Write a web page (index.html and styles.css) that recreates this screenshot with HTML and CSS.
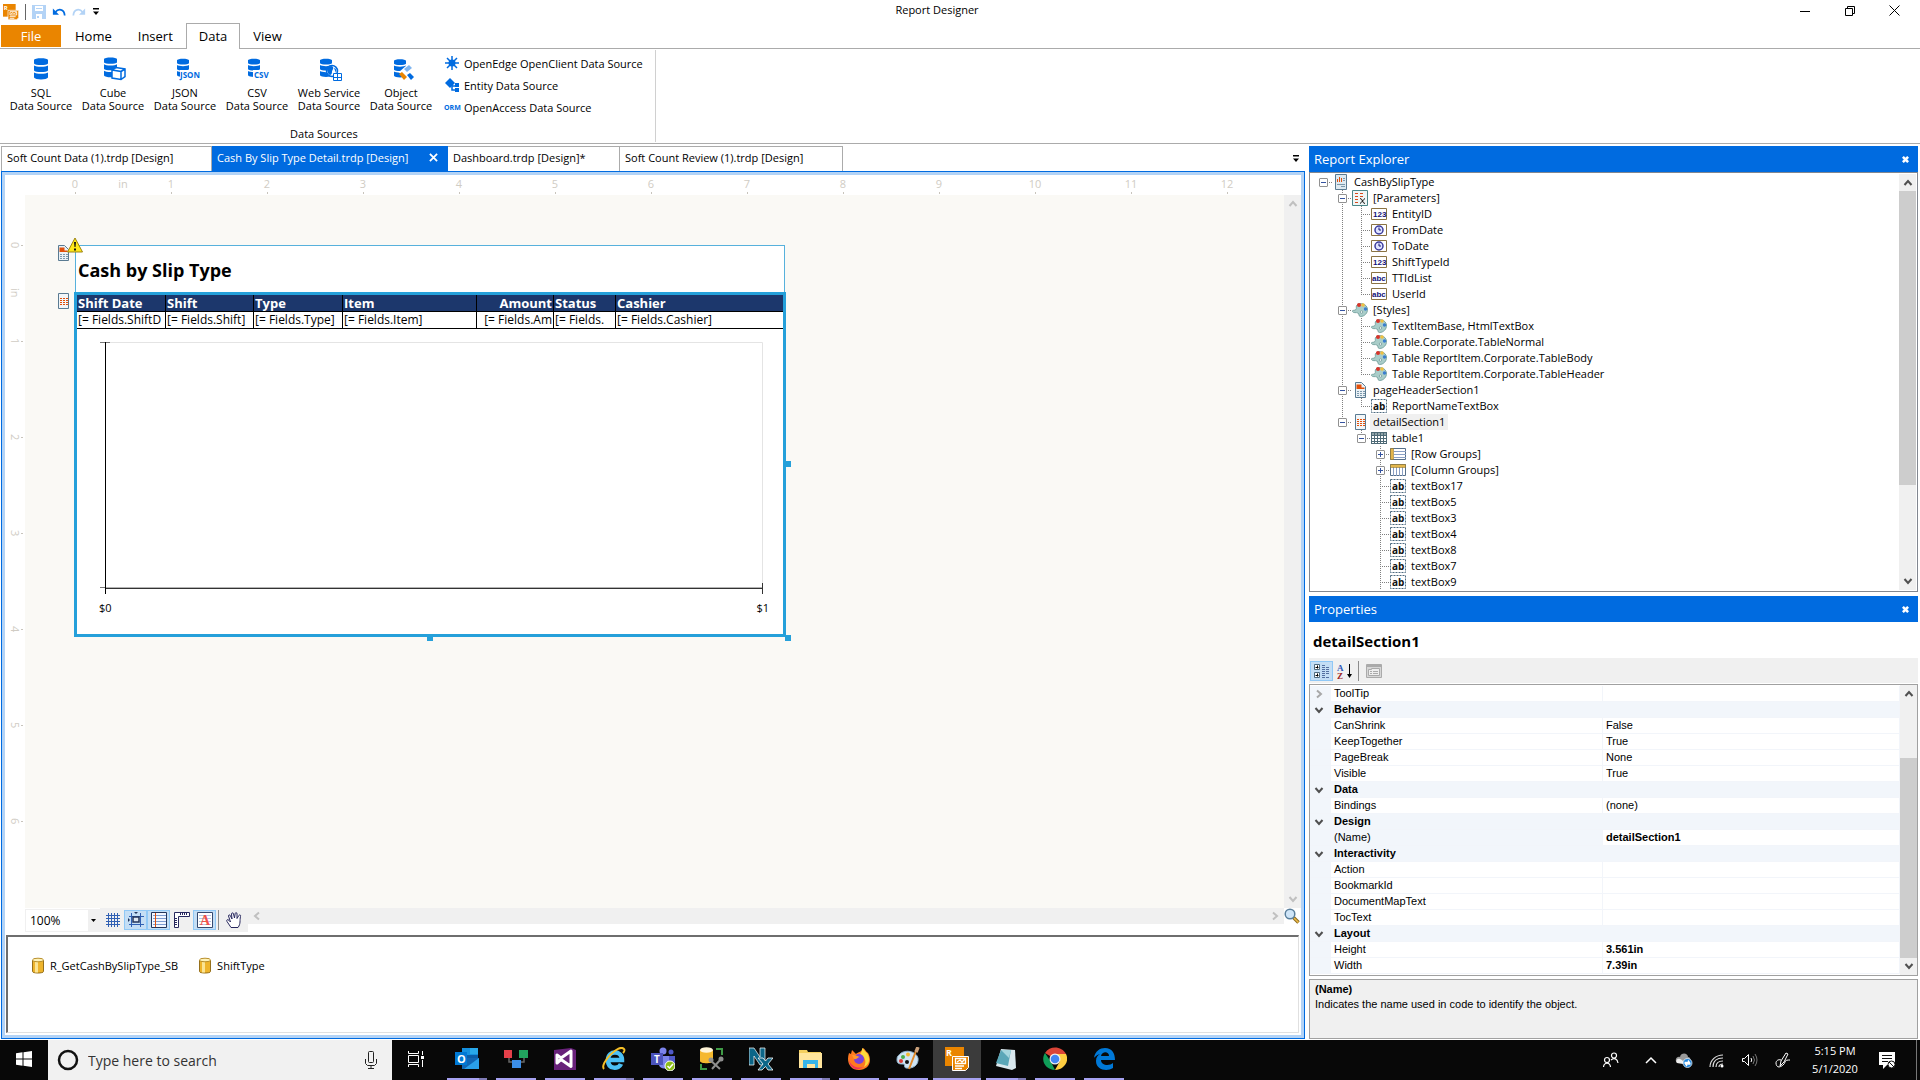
FILE: index.html
```html
<!DOCTYPE html>
<html lang="en">
<head>
    <meta charset="UTF-8">
    <meta name="viewport" content="width=device-width, initial-scale=1.0">
    <title>Report Designer</title>
    <link rel="stylesheet" href="styles.css">
</head>
<body>
    <!-- Shared icons -->
    <svg class="defs" aria-hidden="true">
        <symbol id="db" viewBox="0 0 14 22">
            <path fill="#006be0" d="M0 2c0-2.500 14-2.500 14 0v3.500c-1 2-13 2-14 0zM0 7.500c2 1.800 12 1.800 14 0v5c-1 2-13 2-14 0zM0 14.500c2 1.800 12 1.800 14 0v5c-1 2.500-13 2.500-14 0z"/>
        </symbol>
        <symbol id="app" viewBox="0 0 24 24">
            <path fill="#ea8500" d="M0 0h19v19H0z"/>
            <text x="1" y="9" font-family="Open Sans, sans-serif" font-size="9" font-weight="700" fill="#fff">R</text>
            <path fill="#ea8500" stroke="#fff" d="M7.500 9.500h16v11l-3 3h-13z"/>
            <path fill="none" stroke="#fff" stroke-width="1.300" d="M10.500 11.500h10v5h-10zM12 15l3-2 2 2 3-3M10 19h9M10 21.500h7"/>
        </symbol>
        <symbol id="header-section" viewBox="0 0 14 16">
            <path fill="#eaf1f6" stroke="#5a7b92" d="M2.500.5h6l4 4v11h-10z"/>
            <path fill="#e2500a" d="M3.500 2.500h5v3h3v1.500h-8z"/>
            <path stroke="#7b98ab" stroke-dasharray="2 1" d="M4 9.500h8M4 11.500h8M4 13.500h8"/>
        </symbol>
        <symbol id="detail-section" viewBox="0 0 14 16">
            <path fill="#f3f6f8" stroke="#5a7b92" d="M2.500.5h10v15h-10z"/>
            <path stroke="#e2500a" stroke-dasharray="2 1" d="M4 5.500h8M4 7.500h8M4 9.500h8M4 11.500h8"/>
        </symbol>
        <symbol id="report" viewBox="0 0 16 16">
            <path fill="#dfeaf1" stroke="#5a7b92" d="M2.500.5h11v15h-11z"/>
            <path stroke="#e2500a" d="M4.500 8V5M6.500 8V3M8.500 8V4"/>
            <path stroke="#7b98ab" d="M10 4.500h2M10 6.500h2M4 10.500h8M8 12.500h4"/>
        </symbol>
        <symbol id="params" viewBox="0 0 16 16">
            <path fill="#f0f6f6" stroke="#4b8688" d="M.5.5h15v15H.5z"/>
            <path stroke="#d84a1c" stroke-dasharray="3 2" d="M3 3.500h10M3 6.500h10M3 9.500h5M3 12.500h3"/>
            <path fill="none" stroke="#111" d="M8 8.500c3 0 2 5 5 5M13 8.500c-2 1-3 4-5 5"/>
        </symbol>
        <symbol id="num" viewBox="0 0 16 16">
            <path fill="#fff" stroke="#8a7343" d="M.5 2.500h15v11H.5z"/>
            <text x="2" y="11" font-family="Liberation Sans, sans-serif" font-size="8" font-weight="700" fill="#12127a">123</text>
        </symbol>
        <symbol id="str" viewBox="0 0 16 16">
            <path fill="#fff" stroke="#8a7343" d="M.5 2.500h15v11H.5z"/>
            <text x="1" y="11" font-family="Liberation Sans, sans-serif" font-size="8" font-weight="700" fill="#12127a">abc</text>
        </symbol>
        <symbol id="date" viewBox="0 0 16 16">
            <path fill="#fff" stroke="#8a7343" d="M.5 2.500h15v11H.5z"/>
            <circle cx="8" cy="8" r="4" fill="#dfe4ff" stroke="#3b3b9c" stroke-width="1.500"/>
            <path fill="none" stroke="#12127a" d="M8 5.500V8h2"/>
        </symbol>
        <symbol id="palette" viewBox="0 0 16 16">
            <path fill="#a9cdc9" stroke="#7ba6a3" d="M5 3c3-3 10-1 10.500 4 .3 4-3 7.500-7 7.500-2 0-1-2.500-2.500-3.500S1 11.500.5 9.500 3 9 4 7.500 3.500 4.500 5 3z"/>
            <circle cx="7" cy="3" r="2" fill="#d8342a"/>
            <circle cx="11" cy="3" r="1.800" fill="#f0c040"/>
            <circle cx="13.500" cy="7" r="1.700" fill="#3b7ed0"/>
            <circle cx="9.500" cy="10" r="1.200" fill="#fff" stroke="#64918f" stroke-width=".7"/>
        </symbol>
        <symbol id="textbox" viewBox="0 0 16 16">
            <path fill="#fff" stroke="#4d6a80" stroke-dasharray="2 1" d="M.5 1.500h15v13H.5z"/>
            <text x="2" y="12" font-family="Open Sans, sans-serif" font-size="10" font-weight="700" fill="#111">ab</text>
        </symbol>
        <symbol id="table" viewBox="0 0 16 16">
            <path fill="#fff" d="M0 2h16v12H0z"/>
            <path fill="#8fa3a8" d="M0 2h16v3H0z"/>
            <path stroke="#4e6a76" d="M.5 2v12M3.500 2v12M6.500 2v12M9.500 2v12M12.500 2v12M15.500 2v12M0 2.500h16M0 5.500h16M0 8.500h16M0 11.500h16M0 13.500h16"/>
        </symbol>
        <symbol id="row-groups" viewBox="0 0 16 16">
            <path fill="#fff" stroke="#56708a" d="M.5 2.500h15v11H.5z"/>
            <path stroke="#8aa0c4" d="M4 5.500h12M4 8.500h12M4 11.500h12"/>
            <path fill="#e3b64c" stroke="#8a6a20" stroke-width=".5" d="M.5 2.500h3v11h-3z"/>
        </symbol>
        <symbol id="col-groups" viewBox="0 0 16 16">
            <path fill="#fff" stroke="#56708a" d="M.5 2.500h15v11H.5z"/>
            <path stroke="#8aa0c4" d="M3.500 5v9M6.500 5v9M9.500 5v9M12.500 5v9"/>
            <path fill="#e3b64c" stroke="#8a6a20" stroke-width=".5" d="M.5 2.500h15v3H.5z"/>
        </symbol>
        <symbol id="cylinder" viewBox="0 0 14 18">
            <path fill="#eeb42c" stroke="#96701c" d="M1.500 3v11.500c0 2 11 2 11 0V3"/>
            <path fill="#fbe494" d="M4 4h3v11.500H4z"/>
            <ellipse cx="7" cy="3" rx="5.500" ry="1.800" fill="#fff3b8" stroke="#b98f2c"/>
        </symbol>
        <symbol id="cross" viewBox="0 0 10 10">
            <path fill="none" stroke="currentColor" stroke-width="2" d="M1 1l8 8M9 1L1 9"/>
        </symbol>
        <symbol id="cross-bold" viewBox="0 0 8 8">
            <path fill="none" stroke="currentColor" stroke-width="3" d="M1 1l6 6M7 1L1 7"/>
        </symbol>
        <symbol id="up" viewBox="0 0 10 10">
            <path fill="none" stroke="currentColor" stroke-width="2" d="M1.500 7L5 3l3.500 4"/>
        </symbol>
        <symbol id="down" viewBox="0 0 10 10">
            <path fill="none" stroke="currentColor" stroke-width="2" d="M1.500 3L5 7l3.500-4"/>
        </symbol>
        <symbol id="left" viewBox="0 0 10 10">
            <path fill="none" stroke="currentColor" stroke-width="2" d="M7 1.500L3 5l4 3.500"/>
        </symbol>
        <symbol id="right" viewBox="0 0 10 10">
            <path fill="none" stroke="currentColor" stroke-width="2" d="M3 1.500L7 5 3 8.500"/>
        </symbol>
        <symbol id="menu-arrow" viewBox="0 0 8 8">
            <path d="M1 0h6v1.500H1zM1 3.500h6L4 7z"/>
        </symbol>
    </svg>

    <header class="titlebar">
        <div class="quick-access">
            <svg class="app-icon" viewBox="0 0 24 24"><use href="#app"/></svg>
            <span class="divider"></span>
            <button aria-label="Save"><svg width="14" height="14" viewBox="0 0 14 14"><path fill="#b3d3f6" d="M0 0h14v14H0z"/><path fill="#fff" d="M3 1h8v5H3zM4 9h6v5H4z"/><path fill="#b3d3f6" d="M5 11h2v2H5zM4 3h6v1H4z"/></svg></button>
            <button aria-label="Undo"><svg width="14" height="12" viewBox="0 0 16 12"><path fill="#006be0" d="M1 2v7h7z"/><path fill="none" stroke="#006be0" stroke-width="2" d="M4 6c3-4 10-4 10.500 4"/></svg></button>
            <button aria-label="Redo"><svg width="14" height="12" viewBox="0 0 16 12"><path fill="#b3d3f6" d="M15 2v7H8z"/><path fill="none" stroke="#b3d3f6" stroke-width="2" d="M12 6C9 2 2 2 1.500 10"/></svg></button>
            <button aria-label="Customize toolbar"><svg width="8" height="8"><use href="#menu-arrow"/></svg></button>
        </div>
        <h1 class="window-title">Report Designer</h1>
        <div class="window-controls">
            <button aria-label="Minimize"><svg width="10" height="10"><path stroke="#000" d="M0 5.500h10"/></svg></button>
            <button aria-label="Restore"><svg width="10" height="10"><path fill="none" stroke="#000" d="M.5 2.500h7v7h-7zM2.500 2V.5h7v7H8"/></svg></button>
            <button aria-label="Close"><svg width="11" height="11"><path stroke="#000" d="M.5.5l10 10M10.500.5l-10 10"/></svg></button>
        </div>
    </header>

    <nav class="ribbon-tabs">
        <button class="tab file">File</button>
        <button class="tab">Home</button>
        <button class="tab">Insert</button>
        <button class="tab current">Data</button>
        <button class="tab">View</button>
    </nav>

    <section class="ribbon">
        <div class="ribbon-group">
            <div class="ribbon-items">
                <button class="big-button">
                    <svg class="big-icon" viewBox="0 0 28 24"><use href="#db" x="7" y="1" width="14" height="22"/></svg>
                    SQL<br>Data Source
                </button>
                <button class="big-button">
                    <svg class="big-icon" viewBox="0 0 28 24"><use href="#db" x="5" y="0" width="13" height="21"/><path fill="#fff" stroke="#006be0" stroke-width="1.500" d="M13 13l4-2.500 9 1.500v7.500l-4 3-9-1.500zM13 13l9 1.500v8M22 14.500l4-2.500"/></svg>
                    Cube<br>Data Source
                </button>
                <button class="big-button">
                    <svg class="big-icon" viewBox="0 0 28 24"><use href="#db" x="6" y="1" width="12" height="20"/><path fill="#fff" d="M9 13h20v9H9z"/><text class="icon-text" x="9" y="21">JSON</text></svg>
                    JSON<br>Data Source
                </button>
                <button class="big-button">
                    <svg class="big-icon" viewBox="0 0 28 24"><use href="#db" x="5" y="1" width="12" height="20"/><path fill="#fff" d="M10 13h18v9H10z"/><text class="icon-text" x="11" y="21">CSV</text></svg>
                    CSV<br>Data Source
                </button>
                <button class="big-button">
                    <svg class="big-icon" viewBox="0 0 28 24"><use href="#db" x="5" y="1" width="12" height="20"/><circle cx="17" cy="14" r="5.500" fill="#fff" stroke="#006be0" stroke-width="1.500"/><path fill="#006be0" d="M12 12c1-3 5-4 6-2s-1 3-1 5-1 3-2 3-3-3-3-6zM19 11c2 0 3 3 2 5z"/><path fill="#fff" stroke="#006be0" d="M18.500 16.500h8v7h-8zM22.500 16v8M18 20.500h9"/></svg>
                    Web Service<br>Data Source
                </button>
                <button class="big-button">
                    <svg class="big-icon" viewBox="0 0 28 24"><use href="#db" x="7" y="1" width="12" height="21"/><path fill="#fff" d="M12 15l8-7 6 14-6 2z"/><path fill="#7fb5f0" d="M17 12l5-4 3 3-5 4z"/><path fill="#ea8500" d="M12 17l3-2 5 5-3 3z"/><path fill="#006be0" d="M20 18l3-2 4 4-3 3z"/></svg>
                    Object<br>Data Source
                </button>
                <div class="small-buttons">
                    <button class="small-button">
                        <svg class="small-icon" viewBox="0 0 16 16"><path stroke="#006be0" stroke-width="1.500" d="M8 1v14M1 8h14M3 3l10 10M13 3L3 13"/><circle cx="8" cy="8" r="3.500" fill="#006be0"/></svg>
                        OpenEdge OpenClient Data Source
                    </button>
                    <button class="small-button">
                        <svg class="small-icon" viewBox="0 0 16 16"><path fill="#006be0" d="M6 1l5 5-5 5-5-5z"/><path fill="none" stroke="#006be0" stroke-width="1.500" d="M8 7v6h4M8 9h4"/><path fill="#006be0" d="M11 6h4v4h-4zM11 11h4v4h-4z"/></svg>
                        Entity Data Source
                    </button>
                    <button class="small-button">
                        <svg class="small-icon" viewBox="0 0 16 16"><text class="orm-text" x="0" y="11">ORM</text></svg>
                        OpenAccess Data Source
                    </button>
                </div>
            </div>
            <div class="group-name">Data Sources</div>
        </div>
    </section>

    <div class="workspace">
        <main class="documents">
            <div class="doc-tabs">
                <button class="doc-tab first">Soft Count Data (1).trdp [Design]</button>
                <button class="doc-tab active">Cash By Slip Type Detail.trdp [Design]<svg width="9" height="9"><use href="#cross"/></svg></button>
                <button class="doc-tab third">Dashboard.trdp [Design]*</button>
                <button class="doc-tab fourth">Soft Count Review (1).trdp [Design]</button>
                <button class="doc-menu" aria-label="Open documents"><svg width="8" height="8"><use href="#menu-arrow"/></svg></button>
            </div>

            <div class="designer">
                <div class="ruler-top">
                    <span class="mark">0</span><span class="unit">in</span><span class="mark">1</span><span class="mark">2</span><span class="mark">3</span><span class="mark">4</span><span class="mark">5</span><span class="mark">6</span><span class="mark">7</span><span class="mark">8</span><span class="mark">9</span><span class="mark">10</span><span class="mark">11</span><span class="mark">12</span>
                </div>
                <div class="design-row">
                    <div class="ruler-left">
                        <span class="mark">0</span><span class="unit">in</span><span class="mark">1</span><span class="mark">2</span><span class="mark">3</span><span class="mark">4</span><span class="mark">5</span><span class="mark">6</span>
                    </div>
                    <div class="canvas">
                        <div class="section-icons">
                            <svg width="14" height="16"><use href="#header-section"/></svg>
                            <svg width="14" height="16"><use href="#detail-section"/></svg>
                        </div>
                        <article class="report">
                            <svg class="warning" viewBox="0 0 16 16"><path fill="#ffe81a" stroke="#9c8412" stroke-linejoin="round" d="M8 1l7.500 14H.5z"/><path fill="#111" d="M7 5h2l-.5 5h-1zM7 11.500h2v2H7z"/></svg>
                            <div class="page-header">
                                <h2>Cash by Slip Type</h2>
                            </div>
                            <div class="detail">
                                <table class="report-table">
                                    <colgroup><col class="c-date"><col class="c-shift"><col class="c-date"><col class="c-item"><col class="c-amount"><col class="c-status"><col></colgroup>
                                    <thead>
                                        <tr><th>Shift Date</th><th>Shift</th><th>Type</th><th>Item</th><th class="num">Amount</th><th>Status</th><th>Cashier</th></tr>
                                    </thead>
                                    <tbody>
                                        <tr><td>[= Fields.ShiftD</td><td>[= Fields.Shift]</td><td>[= Fields.Type]</td><td>[= Fields.Item]</td><td class="num">[= Fields.Am</td><td>[= Fields.</td><td>[= Fields.Cashier]</td></tr>
                                    </tbody>
                                </table>
                                <div class="chart">
                                    <svg viewBox="0 0 667 254" width="667" height="254">
                                        <path fill="none" stroke="#e4e4e4" d="M5 2.500h657.500V245"/>
                                        <path stroke="#777" d="M0 2.500h10M0 247.500h10"/>
                                        <path stroke="#b4b4b4" d="M5 247.500h658"/>
                                        <path stroke="#333" d="M5 248.500h658M662.500 243v11"/>
                                        <path stroke="#000" d="M5.500 2v252"/>
                                    </svg>
                                    <div class="chart-labels"><span>$0</span><span>$1</span></div>
                                </div>
                                <i class="handle right"></i>
                                <i class="handle bottom"></i>
                                <i class="handle corner"></i>
                            </div>
                        </article>
                    </div>
                    <div class="scroll-v faded">
                        <svg width="10" height="10"><use href="#up"/></svg>
                        <svg width="10" height="10"><use href="#down"/></svg>
                    </div>
                </div>

                <div class="design-tools">
                    <select class="zoom" aria-label="Zoom"><option>100%</option></select>
                    <div class="tool-buttons">
                        <button aria-label="Show grid"><svg width="16" height="16"><path stroke="#2f5fb3" d="M3.500 1v14M6.500 1v14M9.500 1v14M12.500 1v14M1 3.500h14M1 6.500h14M1 9.500h14M1 12.500h14"/></svg></button>
                        <button class="on" aria-label="Snap to grid"><svg width="16" height="16"><path stroke="#2f5fb3" d="M3.500 1v14M12.500 1v14M1 4.500h15M1 12.500h15"/><path fill="#dfe7f0" stroke="#23345a" stroke-width="1.500" d="M5 5h6v5H5z"/><path fill="#23345a" d="M6 0h4L8 2zM0 6v4l2-2z"/></svg></button>
                        <button class="on" aria-label="Snap lines"><svg width="16" height="16"><path fill="#f2f6ff" stroke="#23345a" d="M.5.5h15v15H.5z"/><path stroke="#7d9bd0" d="M2 3.500h13M2 6.500h13M2 9.500h13M2 12.500h13"/><path stroke="#e2500a" d="M4.500 1v14"/></svg></button>
                        <button aria-label="Show rulers"><svg width="16" height="16"><path fill="#fff" stroke="#28285e" d="M.5.5h15v4h-11v11h-4z"/><path stroke="#28285e" d="M6.500 1v2M8.500 1v2M10.500 1v2M12.500 1v2M1 6.500h2M1 8.500h2M1 10.500h2M1 12.500h2"/></svg></button>
                        <button class="on" aria-label="Show dimensions"><svg width="16" height="16"><path fill="#fff" stroke="#35496f" d="M.5.5h15v15H.5z"/><path stroke="#b4c4e4" d="M2 3.500h12M2 6.500h12M2 9.500h12M2 12.500h12"/><text x="3" y="13" font-family="Liberation Serif, serif" font-size="14" font-weight="700" fill="#f0524a">A</text></svg></button>
                        <span class="divider"></span>
                        <button aria-label="Pan"><svg width="16" height="16" viewBox="0 0 16 16"><path fill="#fff" stroke="#28285e" d="M5 15.500L1 9.500c-1-2 1-2.500 2-1L4.500 10 2.500 4c0-1.500 1.500-1.500 2 0L6 7 5.500 2c0-1.500 2-1.500 2 0L8.500 6l.7-4.500c.3-1.500 2-1 1.800.5L11 6.500l1.800-3c1-1.200 2.200-.5 1.700 1-1 4 .5 7-2.500 11z"/></svg></button>
                    </div>
                    <div class="scroll-h faded">
                        <svg width="10" height="10"><use href="#left"/></svg>
                        <svg width="10" height="10"><use href="#right"/></svg>
                    </div>
                    <button class="magnifier" aria-label="Zoom to fit"><svg width="16" height="16" viewBox="0 0 16 16"><path stroke="#8a6a20" stroke-width="3.500" d="M9.500 9.500l5 5"/><path stroke="#f0bc4a" stroke-width="1.500" d="M10 10l4.500 4.500"/><circle cx="6" cy="6" r="4.800" fill="#cfe5f8" stroke="#5a7f9c" stroke-width="1.500"/></svg></button>
                </div>

                <div class="component-tray">
                    <div class="component"><svg width="14" height="18"><use href="#cylinder"/></svg>R_GetCashBySlipType_SB</div>
                    <div class="component"><svg width="14" height="18"><use href="#cylinder"/></svg>ShiftType</div>
                </div>
            </div>
        </main>

        <aside class="side">
            <section class="panel explorer">
                <header class="panel-title"><h2>Report Explorer</h2><button aria-label="Close Report Explorer"><svg width="7" height="7"><use href="#cross-bold"/></svg></button></header>
                <div class="tree-box">
                    <ul class="tree">
                        <li><div class="node"><i class="toggle open"></i><svg><use href="#report"/></svg><span>CashBySlipType</span></div>
                            <ul>
                                <li><div class="node"><i class="toggle open"></i><svg><use href="#params"/></svg><span>[Parameters]</span></div>
                                    <ul>
                                        <li><div class="node"><i class="toggle"></i><svg><use href="#num"/></svg><span>EntityID</span></div></li>
                                        <li><div class="node"><i class="toggle"></i><svg><use href="#date"/></svg><span>FromDate</span></div></li>
                                        <li><div class="node"><i class="toggle"></i><svg><use href="#date"/></svg><span>ToDate</span></div></li>
                                        <li><div class="node"><i class="toggle"></i><svg><use href="#num"/></svg><span>ShiftTypeId</span></div></li>
                                        <li><div class="node"><i class="toggle"></i><svg><use href="#str"/></svg><span>TTIdList</span></div></li>
                                        <li><div class="node"><i class="toggle"></i><svg><use href="#str"/></svg><span>UserId</span></div></li>
                                    </ul>
                                </li>
                                <li><div class="node"><i class="toggle open"></i><svg><use href="#palette"/></svg><span>[Styles]</span></div>
                                    <ul>
                                        <li><div class="node"><i class="toggle"></i><svg><use href="#palette"/></svg><span>TextItemBase, HtmlTextBox</span></div></li>
                                        <li><div class="node"><i class="toggle"></i><svg><use href="#palette"/></svg><span>Table.Corporate.TableNormal</span></div></li>
                                        <li><div class="node"><i class="toggle"></i><svg><use href="#palette"/></svg><span>Table ReportItem.Corporate.TableBody</span></div></li>
                                        <li><div class="node"><i class="toggle"></i><svg><use href="#palette"/></svg><span>Table ReportItem.Corporate.TableHeader</span></div></li>
                                    </ul>
                                </li>
                                <li><div class="node"><i class="toggle open"></i><svg><use href="#header-section"/></svg><span>pageHeaderSection1</span></div>
                                    <ul>
                                        <li><div class="node"><i class="toggle"></i><svg><use href="#textbox"/></svg><span>ReportNameTextBox</span></div></li>
                                    </ul>
                                </li>
                                <li><div class="node selected"><i class="toggle open"></i><svg><use href="#detail-section"/></svg><span>detailSection1</span></div>
                                    <ul>
                                        <li><div class="node"><i class="toggle open"></i><svg><use href="#table"/></svg><span>table1</span></div>
                                            <ul class="continued">
                                                <li><div class="node"><i class="toggle closed"></i><svg><use href="#row-groups"/></svg><span>[Row Groups]</span></div></li>
                                                <li><div class="node"><i class="toggle closed"></i><svg><use href="#col-groups"/></svg><span>[Column Groups]</span></div></li>
                                                <li><div class="node"><i class="toggle"></i><svg><use href="#textbox"/></svg><span>textBox17</span></div></li>
                                                <li><div class="node"><i class="toggle"></i><svg><use href="#textbox"/></svg><span>textBox5</span></div></li>
                                                <li><div class="node"><i class="toggle"></i><svg><use href="#textbox"/></svg><span>textBox3</span></div></li>
                                                <li><div class="node"><i class="toggle"></i><svg><use href="#textbox"/></svg><span>textBox4</span></div></li>
                                                <li><div class="node"><i class="toggle"></i><svg><use href="#textbox"/></svg><span>textBox8</span></div></li>
                                                <li><div class="node"><i class="toggle"></i><svg><use href="#textbox"/></svg><span>textBox7</span></div></li>
                                                <li><div class="node"><i class="toggle"></i><svg><use href="#textbox"/></svg><span>textBox9</span></div></li>
                                            </ul>
                                        </li>
                                    </ul>
                                </li>
                            </ul>
                        </li>
                    </ul>
                    <div class="scroll-v">
                        <svg width="10" height="10"><use href="#up"/></svg>
                        <div class="track"><div class="thumb tree-thumb"></div></div>
                        <svg width="10" height="10"><use href="#down"/></svg>
                    </div>
                </div>
            </section>

            <section class="panel properties">
                <header class="panel-title"><h2>Properties</h2><button aria-label="Close Properties"><svg width="7" height="7"><use href="#cross-bold"/></svg></button></header>
                <h3 class="object-name">detailSection1</h3>
                <div class="prop-tools">
                    <button class="on" aria-label="Categorized"><svg width="16" height="16"><path fill="#fff" stroke="#4d6a80" d="M.5 1.500h5v5h-5zM.5 9.500h5v5h-5z"/><path stroke="#000" d="M1.500 4.500h3M3.500 2.500v3M1.500 12.500h3M3.500 10.500v3"/><path stroke="#5570a0" d="M8 2.500h3M8 4.500h8M8 6.500h8M8 8.500h8M8 10.500h8M8 12.500h3M8 14.500h8" stroke-dasharray="3 1"/></svg></button>
                    <button aria-label="Alphabetical"><svg width="16" height="16"><text x="0" y="8" font-family="Liberation Serif, serif" font-size="9" font-weight="700" fill="#2a56b8">A</text><text x="0" y="16" font-family="Liberation Serif, serif" font-size="9" font-weight="700" fill="#9c2424">Z</text><path stroke="#000" d="M12.500 1v13"/><path d="M10 11h5l-2.500 4z"/></svg></button>
                    <span class="divider"></span>
                    <button aria-label="Property pages" disabled><svg width="16" height="16"><path fill="#d6d6d6" stroke="#aaa" d="M.5 1.500h15v13H.5z"/><path fill="#aaa" d="M1 2h14v2H1z"/><path fill="#eee" stroke="#aaa" d="M2.500 6.500h3v-1h8v7h-11zM4 8.500h2M7 8.500h5M4 10.500h2M7 10.500h5"/></svg></button>
                </div>
                <div class="grid-box">
                    <table class="prop-grid">
                        <colgroup><col class="g-toggle"><col class="g-name"><col></colgroup>
                        <tbody>
                            <tr><td class="dim"><svg width="10" height="10"><use href="#right"/></svg></td><td>ToolTip</td><td></td></tr>
                            <tr class="category"><td><svg width="10" height="10"><use href="#down"/></svg></td><th colspan="2">Behavior</th></tr>
                            <tr><td></td><td>CanShrink</td><td>False</td></tr>
                            <tr><td></td><td>KeepTogether</td><td>True</td></tr>
                            <tr><td></td><td>PageBreak</td><td>None</td></tr>
                            <tr><td></td><td>Visible</td><td>True</td></tr>
                            <tr class="category"><td><svg width="10" height="10"><use href="#down"/></svg></td><th colspan="2">Data</th></tr>
                            <tr><td></td><td>Bindings</td><td>(none)</td></tr>
                            <tr class="category"><td><svg width="10" height="10"><use href="#down"/></svg></td><th colspan="2">Design</th></tr>
                            <tr class="picked"><td></td><td>(Name)</td><td class="changed">detailSection1</td></tr>
                            <tr class="category"><td><svg width="10" height="10"><use href="#down"/></svg></td><th colspan="2">Interactivity</th></tr>
                            <tr><td></td><td>Action</td><td></td></tr>
                            <tr><td></td><td>BookmarkId</td><td></td></tr>
                            <tr><td></td><td>DocumentMapText</td><td></td></tr>
                            <tr><td></td><td>TocText</td><td></td></tr>
                            <tr class="category"><td><svg width="10" height="10"><use href="#down"/></svg></td><th colspan="2">Layout</th></tr>
                            <tr><td></td><td>Height</td><td class="changed">3.561in</td></tr>
                            <tr><td></td><td>Width</td><td class="changed">7.39in</td></tr>
                        </tbody>
                    </table>
                    <div class="scroll-v">
                        <svg width="10" height="10"><use href="#up"/></svg>
                        <div class="track at-end"><div class="thumb grid-thumb"></div></div>
                        <svg width="10" height="10"><use href="#down"/></svg>
                    </div>
                </div>
                <div class="prop-help">
                    <strong>(Name)</strong>
                    <p>Indicates the name used in code to identify the object.</p>
                </div>
            </section>
        </aside>
    </div>

    <footer class="taskbar">
        <button class="start" aria-label="Start"><svg width="16" height="16"><path fill="#fff" d="M0 2.300l6.500-1v6.200H0zM7.500 1.200L16 0v7.500H7.500zM0 8.500h6.500v6.200l-6.500-1zM7.500 8.500H16V16l-8.500-1.200z"/></svg></button>
        <div class="search">
            <svg width="22" height="22"><circle cx="11" cy="11" r="9" fill="none" stroke="#111" stroke-width="2.500"/></svg>
            <input type="text" placeholder="Type here to search" aria-label="Search">
            <svg width="12" height="18"><rect x="3.500" y=".5" width="5" height="11" rx="1" fill="none" stroke="#222"/><path fill="none" stroke="#222" d="M.5 8v4.500l2 2h7l2-2V8M6 15v2.500M3 17.500h6"/></svg>
        </div>
        <button class="task-view" aria-label="Task view"><svg width="16" height="16"><path fill="none" stroke="#fff" d="M.5 0v2.500h10V0M.5 4.500h10v7H.5zM.5 16v-2.500h10V16M14.500 0v4M14.500 9v7"/><path fill="#fff" d="M13 5h3v3h-3z"/></svg></button>

        <div class="apps">
            <button class="app many" aria-label="Outlook"><svg viewBox="0 0 24 24"><path fill="#1490df" d="M7 1h16v9H7z"/><path fill="#28a8ea" d="M15 1h8v6h-8z"/><path fill="#0a5ca8" d="M7 8h16v5H7z"/><path fill="#1066b5" d="M7 11h17v11H7z"/><path fill="#2aa0ea" d="M24 11v11H9z"/><path fill="#0078d4" d="M0 5h12v13H0z"/><text x="2" y="16" font-family="Open Sans, sans-serif" font-size="11" font-weight="700" fill="#fff">O</text></svg></button>
            <button class="app" aria-label="Workflow"><svg viewBox="0 0 24 24"><path fill="none" stroke="#666" stroke-width="1.500" d="M5 11v4h15v-4"/><path fill="#e5404a" d="M0 3h8v8H0z"/><path fill="#22a45e" d="M15 3h9v8h-9z"/><path fill="#3b8ee8" d="M8 13h9v8H8z"/></svg></button>
            <button class="app" aria-label="Visual Studio"><svg viewBox="0 0 24 24"><path fill="#68217a" d="M1 3l17-2 5 2v20H1z"/><path fill="none" stroke="#fff" stroke-width="3" stroke-linejoin="round" d="M4 8v8l4-3.500 10 7V4L8 11z"/></svg></button>
            <button class="app many" aria-label="Internet Explorer"><svg viewBox="0 0 24 24"><path fill="none" stroke="#4cc0f4" stroke-width="4.500" d="M5 13h15c0-10-14-10-14 0s11 9 13 4"/><path fill="none" stroke="#f5bf27" stroke-width="2" d="M2 22C-3 17 17-4 22 2c1 1 0 3-1 4"/></svg></button>
            <button class="app" aria-label="Teams"><svg viewBox="0 0 24 24"><circle cx="12" cy="4" r="3.500" fill="#7b83eb"/><circle cx="20" cy="5" r="2.500" fill="#5059c9"/><path fill="#7b83eb" d="M8 9h10v10c-3 4-9 3-10-1z"/><path fill="#5059c9" d="M18 9h6v8c-2 3-5 2-6 0z"/><path fill="#4b53bc" d="M0 6h12v12H0z"/><text x="3" y="16" font-family="Open Sans, sans-serif" font-size="10" font-weight="700" fill="#fff">T</text><circle cx="19" cy="19" r="5" fill="#8cbd18" stroke="#fff"/><path fill="none" stroke="#fff" stroke-width="1.500" d="M16.500 19l2 2 3.500-4"/></svg></button>
            <button class="app" aria-label="SQL Server tools"><svg viewBox="0 0 24 24"><path fill="#f5b82e" d="M0 3v11c0 3 13 3 13 0V3z"/><ellipse cx="6.500" cy="3" rx="6.500" ry="2.800" fill="#fff4d8"/><path fill="none" stroke="#3f9b46" stroke-width="2" d="M16 2h6v6M1 17v5h6"/><path stroke="#8f8f8f" stroke-width="2" d="M10 13l10 9M21 12l-9 10"/><circle cx="21" cy="12" r="2.500" fill="#8f8f8f"/><circle cx="11" cy="13" r="2.500" fill="#8f8f8f"/></svg></button>
            <button class="app" aria-label="NX"><svg viewBox="0 0 24 24"><path fill="#0c6688" stroke="#fff" stroke-width=".7" d="M0 1h5l6 9V1h5v17h-5L5 9v9H0z"/><path fill="#0c6688" stroke="#fff" stroke-width=".8" d="M9 11h5l2.500 3 2.500-3h5l-5 6 5 6h-5l-2.500-3.500L13 23H9l5-6z"/></svg></button>
            <button class="app many" aria-label="File Explorer"><svg viewBox="0 0 24 24"><path fill="#f4cf5f" d="M1 3h8l1 2h13v4H1z"/><path fill="#ffe59c" d="M1 6h23v15H1z"/><path fill="#37b5e8" d="M5 21v-8h15v8h-3v-4H9v4z"/></svg></button>
            <button class="app" aria-label="Firefox"><svg viewBox="0 0 24 24"><path fill="#ff7a20" d="M2 6l2 1 1-4 4 4c2-2 6-2 7-6 2 1 3 4 5 5 5 9 0 17-9 17C3 23-1 15 2 6z"/><path fill="#ffd83a" d="M15 1c2 1 3 4 5 5 4 6 2 12-3 14 3-6 1-10-4-13 2-2 2-4 2-6z"/><path fill="#f0325e" d="M2 13c2 6 8 9 14 7-4 4-13 3-14-7z"/><circle cx="12" cy="12" r="5" fill="#7a42d8"/><path fill="#ff9a2a" d="M5 8c4 0 5 1 8 2-2 0-3 3-6 2z"/></svg></button>
            <button class="app" aria-label="Paint"><svg viewBox="0 0 24 24"><path fill="#cfe4f4" stroke="#8fb4d0" d="M4 7C9 2 20 4 22 11c1 7-5 11-12 10-3-1 0-4-3-4s-6 0-6-4 1-4 3-6z"/><circle cx="5" cy="14" r="2" fill="#dc3a34"/><circle cx="7" cy="10" r="2" fill="#4aae4a"/><circle cx="12" cy="7.500" r="2" fill="#f2b832"/><circle cx="11" cy="15" r="2" fill="#111"/><path stroke="#e08a2c" stroke-width="2" d="M13 22l7-18"/><path stroke="#caa07a" stroke-width="3.500" d="M20 5l2-5"/></svg></button>
            <button class="app current" aria-label="Report Designer"><svg viewBox="0 0 24 24"><use href="#app"/></svg></button>
            <button class="app many" aria-label="Notepad"><svg viewBox="0 0 24 24"><path fill="#d9e8ee" d="M7 2l14 1 1 18-4 2-16-4z"/><path fill="#5aa7b8" d="M7 3l10 0-3 16-12-3z"/><path fill="#a5d6de" d="M7 3h10l-2 8z"/></svg></button>
            <button class="app" aria-label="Chrome"><svg viewBox="0 0 24 24"><path fill="#db4437" d="M12 12L2 6C7-2 19-1 23 7H12z"/><path fill="#0f9d58" d="M2 6l6 9 4 8C3 23-3 14 2 6z"/><path fill="#ffcd40" d="M12 7h11c4 8-3 16-11 16l5-9z"/><circle cx="12" cy="12" r="5.500" fill="#f1f1f1"/><circle cx="12" cy="12" r="4.300" fill="#4285f4"/></svg></button>
            <button class="app" aria-label="Edge"><svg viewBox="0 0 24 24"><path fill="#0078d7" d="M2 11C3 4 8 1 13 1c7 0 10 5 10 12H9c0 6 9 6 12 3v5c-6 4-17 2-17-7 0-4 2-6 4-7-4 1-6 4-6 4zm7-2h8c0-5-7-5-8 0z"/></svg></button>
        </div>

        <div class="tray">
            <button aria-label="People"><svg width="16" height="16"><g fill="none" stroke="#fff" stroke-width="1.200"><circle cx="11" cy="3.500" r="2.500"/><circle cx="4" cy="8" r="2.500"/><path d="M.5 15c.5-5 6.500-5 7 0M8 8c3-3 6.500-1 7 3"/></g></svg></button>
            <button aria-label="Show hidden icons"><svg width="12" height="8"><path fill="none" stroke="#fff" stroke-width="1.500" d="M1 7l5-5 5 5"/></svg></button>
            <button aria-label="OneDrive"><svg width="18" height="16"><path fill="#999" d="M2 11c-3-3 0-7 3-6 1-5 8-4 8 0 3 0 4 6 1 7z"/><path fill="#eee" d="M2 11c-2-3 1-5 3-4s4 2 4 5z"/><circle cx="12.500" cy="11" r="4.500" fill="#1d84dc" stroke="#fff" stroke-width=".7"/><path fill="none" stroke="#fff" stroke-width="1.300" d="M9.500 10.500h5l-1.500-2M15.500 12h-5l1.500 2"/></svg></button>
            <button aria-label="Network"><svg width="16" height="16"><g fill="none" stroke="#ddd" stroke-width="1.200"><path d="M1 15C1 8 7 3 14 3M4 15c0-6 4-9 10-9M7 15c0-4 3-6 7-6M10 15c0-2 2-3 4-3"/></g><circle cx="13" cy="14" r="1.500" fill="#fff"/></svg></button>
            <button aria-label="Volume"><svg width="16" height="14"><path fill="none" stroke="#fff" d="M.5 5.500h2l4-4v11l-4-4h-2zM9 5q1.500 2 0 4"/><path fill="none" stroke="#777" d="M11 3q3 4 0 8M13 1q4 6 0 12"/></svg></button>
            <button aria-label="Windows Ink"><svg width="16" height="16"><path fill="none" stroke="#fff" d="M5 14l1-5 5-8 2 1-4 8-4 4zM6 8c-3-1-5 1-5 3s1 4 3 4 6-3 6-5 3-2 5-2"/></svg></button>
            <button class="clock"><span>5:15 PM</span><span>5/1/2020</span></button>
            <button aria-label="Notifications"><svg width="17" height="17"><path fill="#fff" d="M0 0h16v13H8l-4 4v-4H0z"/><path stroke="#111" d="M3 3.500h10M3 6.500h10M3 9.500h6"/><circle cx="12.500" cy="12.500" r="3.500" fill="#fff" stroke="#111"/><path stroke="#111" d="M10 10l5 5"/></svg></button>
            <span class="show-desktop"></span>
        </div>
    </footer>
</body>
</html>
```

FILE: styles.css
```css
* {
    box-sizing: border-box;
}
body {
    margin: 0;
    height: 100vh;
    display: flex;
    flex-direction: column;
    font-family: "Open Sans", "Noto Sans", sans-serif;
    font-size: 11px;
    color: #000;
    background-color: #fff;
    overflow: hidden;
}
h1, h2, h3, p, ul {
    margin: 0;
    padding: 0;
    font-weight: normal;
}
button, input, select {
    font: inherit;
    color: inherit;
    border: 0;
    padding: 0;
    margin: 0;
    background: none;
}
svg {
    flex: none;
}
.defs {
    display: none;
}

/* Title bar */
.titlebar {
    display: flex;
    align-items: center;
    height: 23px;
    padding-right: 3px;
}
.quick-access {
    display: flex;
    align-items: center;
    gap: 6px;
    padding-left: 3px;
}
.quick-access button {
    display: flex;
}
.app-icon {
    width: 16px;
    height: 16px;
}
.quick-access .divider {
    width: 1px;
    height: 16px;
    background-color: #666;
}
.window-title {
    flex: 1;
    text-align: center;
    font-size: 11px;
    line-height: 20px;
    padding: 0 8px 3px 0;
}
.window-controls {
    display: flex;
}
.window-controls button {
    width: 45px;
    height: 23px;
}

/* Ribbon */
.ribbon-tabs {
    display: flex;
    height: 26px;
    padding-left: 1px;
    border-bottom: 1px solid #ababab;
    font-size: 13px;
}
.tab {
    height: 26px;
    padding: 0 12px 2px;
    border: 1px solid transparent;
    border-bottom: 0;
}
.tab.file {
    width: 60px;
    height: 22px;
    margin: 2px 1px 0 0;
    background-color: #ea8500;
    color: #fff;
}
.tab.current {
    border-color: #ababab;
    background-color: #fff;
}
.ribbon {
    display: flex;
    height: 95px;
    border-bottom: 1px solid #ababab;
}
.ribbon-group {
    display: flex;
    flex-direction: column;
    justify-content: space-between;
    padding: 2px 12px 0 5px;
    margin: 1px 0;
    border-right: 1px solid #d0d0d0;
}
.ribbon-items {
    display: flex;
}
.big-button {
    width: 72px;
    line-height: 13px;
    padding-bottom: 2px;
    white-space: nowrap;
}
.big-icon {
    display: block;
    width: 28px;
    height: 24px;
    margin: 0 auto 5px;
    overflow: visible;
}
.icon-text {
    font-size: 8px;
    font-weight: bold;
    fill: #006be0;
}
.orm-text {
    font-size: 7px;
    font-weight: bold;
    fill: #006be0;
}
.small-buttons {
    display: flex;
    flex-direction: column;
    padding-left: 7px;
}
.small-button {
    display: flex;
    align-items: center;
    gap: 4px;
    height: 22px;
    white-space: nowrap;
}
.small-icon {
    width: 16px;
    height: 16px;
    overflow: visible;
}
.group-name {
    text-align: center;
    line-height: 16px;
}

/* Workspace */
.workspace {
    flex: 1;
    display: flex;
    gap: 4px;
    min-height: 0;
    padding: 2px 2px 1px 1px;
}
.documents {
    flex: 1;
    display: flex;
    flex-direction: column;
    min-width: 0;
}
.doc-tabs {
    display: flex;
    height: 25px;
}
.doc-tab {
    text-align: left;
    padding: 0 5px 3px;
    border: 1px solid #ababab;
    border-bottom: 0;
    border-left: 0;
    white-space: nowrap;
}
.doc-tab.first {
    width: 211px;
    border-left: 1px solid #ababab;
}
.doc-tab.active {
    display: flex;
    align-items: center;
    justify-content: space-between;
    width: 236px;
    padding-right: 9px;
    background-color: #006be0;
    border-color: #006be0;
    color: #fff;
}
.doc-tab.third {
    width: 172px;
}
.doc-tab.fourth {
    width: 223px;
}
.doc-menu {
    margin-left: auto;
    padding-right: 5px;
}
.designer {
    flex: 1;
    display: flex;
    flex-direction: column;
    min-height: 0;
    border: 1px solid #006be0;
    box-shadow: inset 0 0 0 3px #b3d3f6;
    padding: 3px;
}
.ruler-top {
    display: flex;
    height: 20px;
    padding-left: 22px;
    color: #d0ccc4;
    overflow: hidden;
}
.ruler-top .mark {
    width: 96px;
    text-align: center;
    line-height: 18px;
    background: linear-gradient(#c8c4bc, #c8c4bc) 48px 17px / 1px 2px no-repeat;
}
.ruler-top .unit {
    width: 20px;
    margin: 0 -10px;
    text-align: center;
    line-height: 18px;
}
.design-row {
    flex: 1;
    display: flex;
    min-height: 0;
}
.ruler-left {
    width: 20px;
    padding-top: 2px;
    overflow: hidden;
    color: #d0ccc4;
    writing-mode: vertical-rl;
}
.ruler-left .mark {
    display: inline-block;
    height: 96px;
    width: 20px;
    text-align: center;
    line-height: 20px;
    background: linear-gradient(#c8c4bc, #c8c4bc) 16px 48px / 2px 1px no-repeat;
}
.ruler-left .unit {
    display: inline-block;
    height: 20px;
    width: 20px;
    margin: -10px 0;
    text-align: center;
    line-height: 20px;
}
.canvas {
    flex: 1;
    display: flex;
    align-items: flex-start;
    min-width: 0;
    background-color: #faf9f5;
    padding: 50px 0 0 31px;
}
.section-icons {
    display: flex;
    flex-direction: column;
    gap: 32px;
    width: 18px;
}
.report {
    position: relative;
    width: 712px;
}
.warning {
    position: absolute;
    left: -7px;
    top: -8px;
    width: 16px;
    height: 16px;
}
.page-header {
    height: 47px;
    margin: 0 1px;
    padding: 11px 2px;
    border: 1px solid #57b1dc;
    border-bottom: 0;
    background-color: #fff;
}
.page-header h2 {
    font-size: 18px;
    font-weight: bold;
    line-height: 26px;
}
.detail {
    position: relative;
    border: 3px solid #25a0da;
    background-color: #fff;
}
.report-table {
    width: 100%;
    table-layout: fixed;
    border-collapse: separate;
    border-spacing: 0;
}
.c-date {
    width: 89px;
}
.c-shift {
    width: 88px;
}
.c-item {
    width: 134px;
}
.c-amount {
    width: 77px;
}
.c-status {
    width: 62px;
}
.report-table th,
.report-table td {
    height: 17px;
    padding: 0 1px;
    line-height: 16px;
    text-align: left;
    white-space: nowrap;
    overflow: hidden;
    border-right: 1px solid #000;
    border-bottom: 1px solid #000;
}
.report-table th:last-child,
.report-table td:last-child {
    border-right: 0;
}
.report-table th {
    background-color: #1c376c;
    color: #fff;
    font-size: 13px;
}
.report-table td {
    font-size: 12px;
}
.report-table .num {
    text-align: right;
}
.chart {
    padding: 11px 15px 17px 23px;
}
.chart svg {
    display: block;
}
.chart-labels {
    display: flex;
    justify-content: space-between;
    margin: 5px -1px 0;
    line-height: 18px;
}
.handle {
    position: absolute;
    width: 6px;
    height: 6px;
    background-color: #25a0da;
}
.handle.right {
    right: -8px;
    top: 166px;
}
.handle.bottom {
    left: 350px;
    bottom: -7px;
}
.handle.corner {
    right: -8px;
    bottom: -7px;
}
.scroll-v {
    display: flex;
    flex-direction: column;
    align-items: center;
    justify-content: space-between;
    width: 17px;
    padding: 4px 0;
    background-color: #f0f0f0;
    color: #505050;
}
.scroll-v.faded,
.scroll-h.faded {
    color: #c0c0c0;
}
.track {
    flex: 1;
    display: flex;
    flex-direction: column;
    width: 100%;
    margin: 3px 0;
}
.track.at-end {
    justify-content: flex-end;
}
.thumb {
    background-color: #cdcdcd;
}
.tree-thumb {
    height: 77%;
}
.grid-thumb {
    height: 78%;
}

/* Toolbar under the design surface */
.design-tools {
    display: flex;
    height: 24px;
    padding-left: 20px;
}
.zoom {
    appearance: none;
    width: 75px;
    height: 23px;
    margin-top: 1px;
    padding-left: 4px;
    border: 1px solid #f0f0f0;
    font-size: 12px;
    background: url("data:image/svg+xml,%3Csvg xmlns='http://www.w3.org/2000/svg' width='11' height='23'%3E%3Cpath fill='%23f0f0f0' d='M0 0h11v23H0z'/%3E%3Cpath d='M3 10h5l-2.500 3z'/%3E%3C/svg%3E") right center no-repeat #fff;
}
.tool-buttons {
    display: flex;
    align-items: center;
    padding: 0 3px 0 1px;
    background-color: #f0f0f0;
}
.tool-buttons button,
.prop-tools button {
    display: flex;
    align-items: center;
    justify-content: center;
    width: 23px;
    height: 20px;
    border: 1px solid transparent;
}
.tool-buttons button.on,
.prop-tools button.on {
    border-color: #90c8f6;
    background-color: #c4def5;
}
.tool-buttons .divider,
.prop-tools .divider {
    width: 1px;
    height: 20px;
    margin: 0 3px 0 2px;
    background-color: #8c8c8c;
}
.scroll-h {
    flex: 1;
    display: flex;
    align-items: center;
    justify-content: space-between;
    height: 16px;
    padding: 0 4px;
    background-color: #f0f0f0;
}
.magnifier {
    display: flex;
    width: 17px;
}
.component-tray {
    display: flex;
    align-items: flex-start;
    gap: 20px;
    height: 98px;
    margin: 3px 2px 2px 1px;
    padding: 20px 23px;
    border: 2px solid #6e6e6e;
    border-right: 1px solid #e0e0e0;
    border-bottom: 1px solid #e0e0e0;
}
.component {
    display: flex;
    align-items: center;
    gap: 5px;
    line-height: 18px;
}

/* Side panels */
.side {
    width: 32%;
    max-width: 609px;
    display: flex;
    flex-direction: column;
    gap: 4px;
}
.panel {
    display: flex;
    flex-direction: column;
    min-height: 0;
}
.explorer {
    flex: 446 1 0;
}
.properties {
    flex: 443 1 0;
}
.panel-title {
    display: flex;
    align-items: center;
    justify-content: space-between;
    height: 26px;
    padding: 0 9px 0 5px;
    background-color: #006be0;
    color: #fff;
}
.panel-title h2 {
    font-size: 13px;
}
.panel-title button {
    display: flex;
}
.tree-box {
    flex: 1;
    display: flex;
    min-height: 0;
    padding: 1px;
    border: 1px solid #828790;
}
.tree {
    flex: 1;
    padding: 0 0 0 3px;
    overflow: hidden;
}
.tree,
.tree ul {
    list-style: none;
}
.tree ul {
    padding-left: 19px;
}
.tree ul li {
    background: repeating-linear-gradient(#808080 0 1px, transparent 1px 2px) 9px 0 / 1px 100% no-repeat;
}
.tree ul li:last-child {
    background-size: 1px 8px;
}
.tree ul.continued li:last-child {
    background-size: 1px 100%;
}
.node {
    display: flex;
    align-items: center;
    height: 16px;
    background: repeating-linear-gradient(90deg, #808080 0 1px, transparent 1px 2px) 9px 8px / 10px 1px no-repeat;
}
.node svg {
    width: 16px;
    height: 16px;
}
.node span {
    margin-left: 2px;
    padding: 0 3px;
    line-height: 16px;
}
.node.selected span {
    background-color: #f0f0f0;
}
.toggle {
    width: 9px;
    height: 9px;
    margin: 0 5px;
}
.toggle.open,
.toggle.closed {
    border: 1px solid #919191;
    border-radius: 1px;
    background: linear-gradient(#3553a0, #3553a0) center / 5px 1px no-repeat, #fff;
}
.toggle.closed {
    background: linear-gradient(#3553a0, #3553a0) center / 5px 1px no-repeat, linear-gradient(#3553a0, #3553a0) center / 1px 5px no-repeat, #fff;
}
.object-name {
    padding: 7px 4px 5px;
    font-size: 15px;
    font-weight: bold;
    line-height: 24px;
}
.prop-tools {
    display: flex;
    align-items: center;
    height: 25px;
    padding-left: 1px;
    background-color: #f0f0f0;
}
.grid-box {
    flex: 1;
    display: flex;
    align-items: flex-start;
    min-height: 0;
    margin-top: 1px;
    border: 1px solid #a0a0a0;
    overflow: hidden;
}
.grid-box .scroll-v {
    align-self: stretch;
}
.prop-grid {
    flex: 1;
    margin-top: 1px;
    table-layout: fixed;
    border-collapse: separate;
    border-spacing: 0;
    font-family: "Liberation Sans", Arial, sans-serif;
}
.g-toggle {
    width: 21px;
}
.g-name {
    width: 272px;
}
.prop-grid td,
.prop-grid th {
    height: 16px;
    padding: 0 3px;
    line-height: 15px;
    text-align: left;
    border: 1px solid #f2f5fa;
    border-top: 0;
    border-left: 0;
}
.prop-grid td:first-child {
    padding: 0 5px 0 4px;
    background-color: #f2f6fb;
    color: #505050;
}
.prop-grid td:first-child.dim {
    color: #a8a8a8;
}
.prop-grid td svg {
    display: block;
}
.category th,
.picked td:nth-child(2) {
    background-color: #f2f6fb;
}
.prop-grid .changed {
    font-weight: bold;
}
.prop-help {
    height: 60px;
    margin-top: 3px;
    padding: 2px 5px;
    border: 1px solid #a0a0a0;
    background-color: #f0f0f0;
    font-family: "Liberation Sans", Arial, sans-serif;
    line-height: 15px;
}

/* Taskbar */
.taskbar {
    display: flex;
    height: 40px;
    background-color: #080808;
    color: #fff;
}
.start,
.task-view {
    width: 48px;
}
.search {
    display: flex;
    align-items: center;
    gap: 9px;
    width: 344px;
    padding: 0 15px 0 9px;
    background-color: #f1f1f1;
    color: #333;
    font-size: 14px;
}
.search input {
    flex: 1;
    min-width: 0;
}
.search input::placeholder {
    color: #333;
    opacity: 1;
}
.apps {
    flex: 1;
    display: flex;
    gap: 9px;
    padding-left: 7px;
}
.app {
    display: flex;
    justify-content: center;
    align-items: center;
    width: 40px;
    border-bottom: 2px solid #a6a1f0;
}
.app svg {
    width: 24px;
    height: 24px;
}
.app.many {
    border-image: linear-gradient(90deg, #a6a1f0 0 31px, #7f7bb5 31px) 2;
}
.app.current {
    width: 48px;
    margin: 0 -4px;
    background-color: #3b3b3b;
}
.tray {
    display: flex;
    align-items: center;
}
.tray button {
    display: flex;
    align-items: center;
    justify-content: center;
    width: 33px;
    height: 40px;
}
.tray button:first-child {
    width: 46px;
}
.tray .clock {
    flex-direction: column;
    width: 72px;
    line-height: 18px;
}
.show-desktop {
    width: 4px;
    height: 40px;
    margin-left: 12px;
    border-left: 1px solid #777;
}
```
